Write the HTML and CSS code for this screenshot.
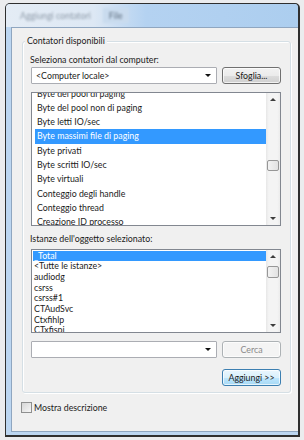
FILE: index.html
```html
<!DOCTYPE html>
<html lang="it">
<head>
  <meta charset="UTF-8">
  <title>Aggiungi contatori</title>
  <link rel="stylesheet" href="styles.css">
</head>
<body>
  <div class="window">
    <div class="titlebar">
      <span class="title-text">Aggiungi contatori</span>
      <span class="title-tab">File</span>
    </div>
    <div class="client">
      <div class="group">
        <div class="group-title">Contatori disponibili</div>
        <div class="label">Seleziona contatori dal computer:</div>
        <div class="row">
          <div class="combo"><span>&lt;Computer locale&gt;</span><span class="arrow"></span></div>
          <div class="btn">Sfoglia...</div>
        </div>

        <div class="list list-counters">
          <div class="items">
            <div class="item">Byte del pool di paging</div>
            <div class="item">Byte del pool non di paging</div>
            <div class="item">Byte letti IO/sec</div>
            <div class="item selected">Byte massimi file di paging</div>
            <div class="item">Byte privati</div>
            <div class="item">Byte scritti IO/sec</div>
            <div class="item">Byte virtuali</div>
            <div class="item">Conteggio degli handle</div>
            <div class="item">Conteggio thread</div>
            <div class="item">Creazione ID processo</div>
          </div>
          <div class="scrollbar">
            <div class="sb-btn"><span class="up"></span></div>
            <div class="sb-track"><div class="thumb"></div></div>
            <div class="sb-btn"><span class="down"></span></div>
          </div>
        </div>

        <div class="label">Istanze dell'oggetto selezionato:</div>
        <div class="list list-instances">
          <div class="items">
            <div class="item selected">_Total</div>
            <div class="item">&lt;Tutte le istanze&gt;</div>
            <div class="item">audiodg</div>
            <div class="item">csrss</div>
            <div class="item">csrss#1</div>
            <div class="item">CTAudSvc</div>
            <div class="item">Ctxfihlp</div>
            <div class="item">CTxfispi</div>
          </div>
          <div class="scrollbar">
            <div class="sb-btn"><span class="up"></span></div>
            <div class="sb-track"><div class="thumb"></div></div>
            <div class="sb-btn"><span class="down"></span></div>
          </div>
        </div>

        <div class="row search-row">
          <div class="combo"><span></span><span class="arrow"></span></div>
          <div class="btn disabled">Cerca</div>
        </div>
        <div class="row add-row">
          <div class="btn default">Aggiungi &gt;&gt;</div>
        </div>
      </div>

      <div class="check-row">
        <span class="checkbox"></span>
        <span>Mostra descrizione</span>
      </div>
    </div>
  </div>
</body>
</html>
```

FILE: styles.css
```css
* {
  box-sizing: border-box;
}
body {
  margin: 0;
  background: #ebecee;
  font-family: Lato, "Noto Sans", sans-serif;
  font-size: 8.8px;
  color: #1b1b1b;
}
.window {
  display: flex;
  flex-direction: column;
  width: 295px;
  height: 434px;
  margin: 3px 0 0 5px;
  border: 1px solid #2f2f2f;
  border-right-width: 2px;
  border-bottom-width: 2px;
  border-radius: 5px 5px 0 0;
  background: #bcd6f1;
}
.titlebar {
  display: flex;
  align-items: center;
  height: 23px;
  padding-left: 14px;
  background: linear-gradient(90deg, #e4ecf5 0%, #dde8f4 30%, #b4d2f1 48%, #acceef 100%);
  border-radius: 4px 4px 0 0;
}
.title-text {
  color: #8d9aa8;
  filter: blur(1.2px);
}
.title-tab {
  margin-left: 12px;
  padding: 2px 6px;
  color: #5f6f80;
  background: #c9dbee;
  filter: blur(1px);
}
.client {
  flex: 1;
  margin: 0 0 3px 5px;
  border: 1px solid #8fa6c0;
  border-right: none;
  background: #f0f0f0;
}
.group {
  margin: 13px 0 0 10px;
  width: 269px;
  padding: 0 9px 6px 8px;
  border: 1px solid #d5dfe5;
  border-radius: 3px;
  box-shadow: inset 1px 1px 0 #fff, 1px 1px 0 #fff;
}
.group-title {
  width: fit-content;
  margin: -7px 0 0 -6px;
  padding: 0 2px;
  line-height: 12px;
  background: #f0f0f0;
}
.label {
  margin: 7px 0 0 -1px;
  line-height: 12px;
}
.row {
  display: flex;
  gap: 5px;
  height: 17px;
  margin-top: 1px;
}
.combo {
  display: flex;
  align-items: center;
  justify-content: space-between;
  width: 186px;
  padding: 0 5px 0 4px;
  background: #fff;
  border: 1px solid #abadb3;
  border-radius: 1px;
}
.arrow {
  width: 0;
  height: 0;
  border-left: 3px solid transparent;
  border-right: 3px solid transparent;
  border-top: 3px solid #111;
}
.btn {
  display: flex;
  align-items: center;
  justify-content: center;
  width: 59px;
  border: 1px solid #707070;
  border-radius: 3px;
  background: linear-gradient(#f2f2f2 0%, #ebebeb 50%, #dddddd 51%, #cfcfcf 100%);
  box-shadow: inset 0 0 0 1px rgba(255, 255, 255, 0.7);
}
.btn.disabled {
  color: #8a8a8a;
  border-color: #adb2b5;
  background: #f4f4f4;
}
.btn.default {
  border-color: #3c7fb1;
  background: linear-gradient(#eaf6fd 0%, #d9f0fc 50%, #bee6fd 51%, #a7d9f5 100%);
}
.list {
  display: flex;
  overflow: hidden;
  background: #fff;
  border: 1px solid #828790;
}
.list .items {
  flex: 1;
}
.list-counters {
  height: 134px;
  margin-top: 8px;
}
.list-counters .items {
  margin-top: -6.5px;
  padding-left: 3px;
}
.list-counters .item {
  padding-left: 2px;
  line-height: 14.3px;
}
.list-instances {
  height: 84px;
  margin-top: 4px;
}
.list-instances .items {
  padding-top: 0.7px;
  padding-left: 1px;
}
.list-instances .item {
  padding-left: 1px;
  line-height: 10.67px;
}
.item {
  white-space: nowrap;
}
.item.selected {
  background: #3399ff;
  color: #fff;
}
.scrollbar {
  display: flex;
  flex-direction: column;
  width: 14px;
  background: linear-gradient(90deg, #e7e7e7, #f4f4f4 20%, #f4f4f4 80%, #ececec);
}
.sb-btn {
  display: flex;
  align-items: center;
  justify-content: center;
  height: 13px;
}
.up, .down {
  width: 0;
  height: 0;
  border-left: 3px solid transparent;
  border-right: 3px solid transparent;
}
.up {
  border-bottom: 3px solid #3d3d3d;
}
.down {
  border-top: 3px solid #3d3d3d;
}
.sb-track {
  flex: 1;
  padding: 0 1px;
}
.thumb {
  height: 11px;
  border: 1px solid #979797;
  border-radius: 2px;
  background: linear-gradient(90deg, #f3f3f3, #e2e2e2);
}
.list-counters .thumb {
  margin-top: 54px;
}
.list-instances .thumb {
  margin-top: 3px;
  height: 12px;
}
.search-row {
  margin-top: 8px;
}
.add-row {
  justify-content: flex-end;
  margin-top: 11px;
}
.check-row {
  display: flex;
  align-items: center;
  gap: 2px;
  margin: 9px 0 0 9px;
  line-height: 11px;
}
.checkbox {
  width: 11px;
  height: 11px;
  border: 1px solid #8e8f8f;
  background: linear-gradient(135deg, #d6d6d6, #f6f6f6);
}
```
